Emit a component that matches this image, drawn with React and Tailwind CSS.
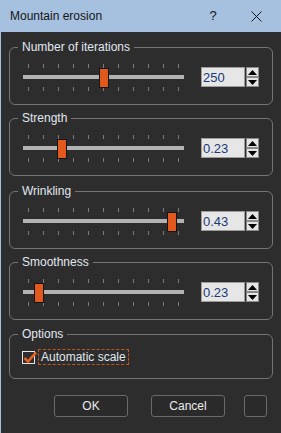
import React from "react";

// Werte der Regler: frac = Position des Griffs (0..1)
const sliders = [
  { label: "Number of iterations", value: "250", frac: 0.507 },
  { label: "Strength", value: "0.23", frac: 0.227 },
  { label: "Wrinkling", value: "0.43", frac: 0.96 },
  { label: "Smoothness", value: "0.23", frac: 0.073 },
];

const font = { fontFamily: '"Liberation Sans", Arial, sans-serif' };

function Ticks({ className }) {
  return (
    <div className={"flex justify-between px-[5px] h-[4px] " + className}>
      {Array.from({ length: 11 }).map((_, i) => (
        <div key={i} className="w-px h-full bg-[#7c7c7c]" />
      ))}
    </div>
  );
}

function Slider({ frac }) {
  return (
    <div className="relative w-[161px] h-[40px] flex flex-col">
      <Ticks className="mt-[7px]" />
      <div className="mt-[7px] h-[4px] bg-[#b2b2b2]" />
      <Ticks className="mt-[8px]" />
      <div
        className="absolute top-[11px] w-[10px] h-[20px] bg-[#e2591d] border border-[#151515]"
        style={{ left: Math.round(frac * 150) }}
      />
    </div>
  );
}

function Arrow({ up }) {
  return (
    <div className="flex-1 flex items-center justify-center bg-[#e4e4e4] border border-[#8a8a8a]">
      <svg width="9" height="5" viewBox="0 0 9 5">
        {up ? <polygon points="0,5 9,5 4.5,0" fill="#000" /> : <polygon points="0,0 9,0 4.5,5" fill="#000" />}
      </svg>
    </div>
  );
}

function SpinBox({ value }) {
  return (
    <div className="flex w-[58px] h-[20px]">
      <div className="flex-1 flex items-center bg-[#e6e6e6] border border-[#9c9c9c] pl-[1px] text-[13px] text-[#183a78] leading-none">
        {value}
      </div>
      <div className="w-[13px] flex flex-col ml-[1px]">
        <Arrow up />
        <Arrow />
      </div>
    </div>
  );
}

function Group({ label, className, children }) {
  return (
    <fieldset className={"mx-[8px] border border-[#747474] rounded-[6px] " + className}>
      <legend className="ml-[8px] px-[4px] text-[12px] leading-[14px] text-[#e1e8f0]">{label}</legend>
      {children}
    </fieldset>
  );
}

export default function App() {
  const tops = ["mt-[8px]", "mt-[6px]", "mt-[8px]", "mt-[6px]"];
  return (
    <div className="w-[281px] h-[433px] flex flex-col bg-[#2d2d2d] overflow-hidden" style={font}>
      {/* Titelleiste */}
      <div className="h-[32px] shrink-0 flex items-center bg-[#a6c1df] text-[#151515] text-[12px]">
        <div className="pl-[10px] flex-1">Mountain erosion</div>
        <div className="w-[16px] text-center text-[13px] mr-[30px]">?</div>
        <svg width="11" height="11" viewBox="0 0 11 11" className="mr-[19px]">
          <path d="M0.5 0.5 L10.5 10.5 M10.5 0.5 L0.5 10.5" stroke="#151515" strokeWidth="1" />
        </svg>
      </div>

      <div className="flex-1 flex flex-col border-l border-[#a6c1df]">
        {sliders.map((s, i) => (
          <Group key={s.label} label={s.label} className={tops[i]}>
            <div className="pt-[3px] pb-[7px] flex items-center pl-[13px]">
              <Slider frac={s.frac} />
              <div className="ml-[17px]">
                <SpinBox value={s.value} />
              </div>
            </div>
          </Group>
        ))}

        <Group label="Options" className="mt-[7px]">
          <div className="mt-[8px] mb-[13px] h-[16px] flex items-center pl-[12px]">
            <div className="relative w-[13px] h-[13px] border border-[#e6e6e6]">
              <svg width="15" height="13" viewBox="0 0 15 13" className="absolute left-[0px] top-[-1px]">
                <path d="M1.5 7 L5 10.5 L13 1.5" stroke="#e8601f" strokeWidth="2.6" fill="none" />
              </svg>
            </div>
            <div className="ml-[3px] h-[16px] flex items-center px-[2px] border border-dashed border-[#c0561f] text-[12px] text-[#e1e8f0] leading-none">
              Automatic scale
            </div>
          </div>
        </Group>

        <div className="mt-[16px] flex pl-[53px]">
          <button className="w-[74px] h-[22px] border border-[#6a6a6a] rounded-[3px] bg-[#2a2a2a] text-[12px] text-[#ececec]">
            OK
          </button>
          <button className="ml-[23px] w-[74px] h-[22px] border border-[#6a6a6a] rounded-[3px] bg-[#2a2a2a] text-[12px] text-[#ececec]">
            Cancel
          </button>
          <button className="ml-[19px] w-[23px] h-[22px] border border-[#6a6a6a] rounded-[3px] bg-[#2a2a2a]" />
        </div>
      </div>
    </div>
  );
}
